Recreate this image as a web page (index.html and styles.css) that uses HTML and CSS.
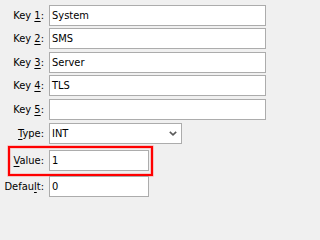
FILE: index.html
```html
<!DOCTYPE html>
<html>
<head>
<meta charset="utf-8">
<link rel="stylesheet" href="styles.css">
</head>
<body>
<div class="form">
  <div class="row gap-2">
    <div class="lbl">Key <u>1</u>:</div>
    <div class="field wide">System</div>
  </div>
  <div class="row gap-3">
    <div class="lbl">Key <u>2</u>:</div>
    <div class="field wide">SMS</div>
  </div>
  <div class="row gap-2">
    <div class="lbl">Key <u>3</u>:</div>
    <div class="field wide">Server</div>
  </div>
  <div class="row gap-3">
    <div class="lbl">Key <u>4</u>:</div>
    <div class="field wide">TLS</div>
  </div>
  <div class="row gap-3">
    <div class="lbl">Key <u>5</u>:</div>
    <div class="field wide"></div>
  </div>
  <div class="row gap-2">
    <div class="lbl"><u>T</u>ype:</div>
    <div class="field combo">
      <span class="combo-text">INT</span>
      <svg class="chevron" width="8" height="5" viewBox="0 0 8 5">
        <path d="M0.8 0.8 L4 3.8 L7.2 0.8" fill="none" stroke="#5a5a5a" stroke-width="1.6"/>
      </svg>
    </div>
  </div>
  <div class="row highlight">
    <div class="lbl"><u>V</u>alue:</div>
    <div class="field small">1</div>
  </div>
  <div class="row">
    <div class="lbl">Defau<u>l</u>t:</div>
    <div class="field small">0</div>
  </div>
</div>
</body>
</html>
```

FILE: styles.css
```css
html {
  background: #f0f0f0;
}

body {
  margin: 0;
  padding: 0;
  background: #f0f0f0;
  min-height: 202px;
  font-family: Tahoma, "DejaVu Sans Condensed", "Liberation Sans", sans-serif;
  font-size: 11px;
  color: #000;
}

.form {
  display: flex;
  flex-direction: column;
  align-items: flex-start;
  padding-top: 5px;
}

.row {
  display: flex;
  align-items: center;
  height: 21px;
}

.gap-2 { margin-bottom: 2px; }
.gap-3 { margin-bottom: 3px; }

.lbl {
  width: 44px;
  text-align: right;
  white-space: nowrap;
  color: #000;
}

.lbl u {
  text-decoration: underline;
  text-underline-offset: 2px;
}

.field {
  box-sizing: border-box;
  height: 21px;
  margin-left: 5px;
  background: #fff;
  border: 1px solid #acacac;
  padding-left: 2px;
  display: flex;
  align-items: center;
  white-space: nowrap;
}

.wide { width: 217px; }
.small { width: 100px; }

.combo {
  width: 133px;
  justify-content: space-between;
  padding-right: 4px;
}

.chevron {
  display: block;
}

.highlight {
  box-sizing: content-box;
  margin-left: 8px;
  border: 2px solid #ff0000;
  box-shadow: 0 0 0 0.6px rgba(255, 80, 80, 0.45), inset 0 0 0 0.6px rgba(255, 80, 80, 0.45);
  padding: 2px 2px 3px 0;
  height: 21px;
}

.highlight .lbl {
  width: 34px;
}
```
